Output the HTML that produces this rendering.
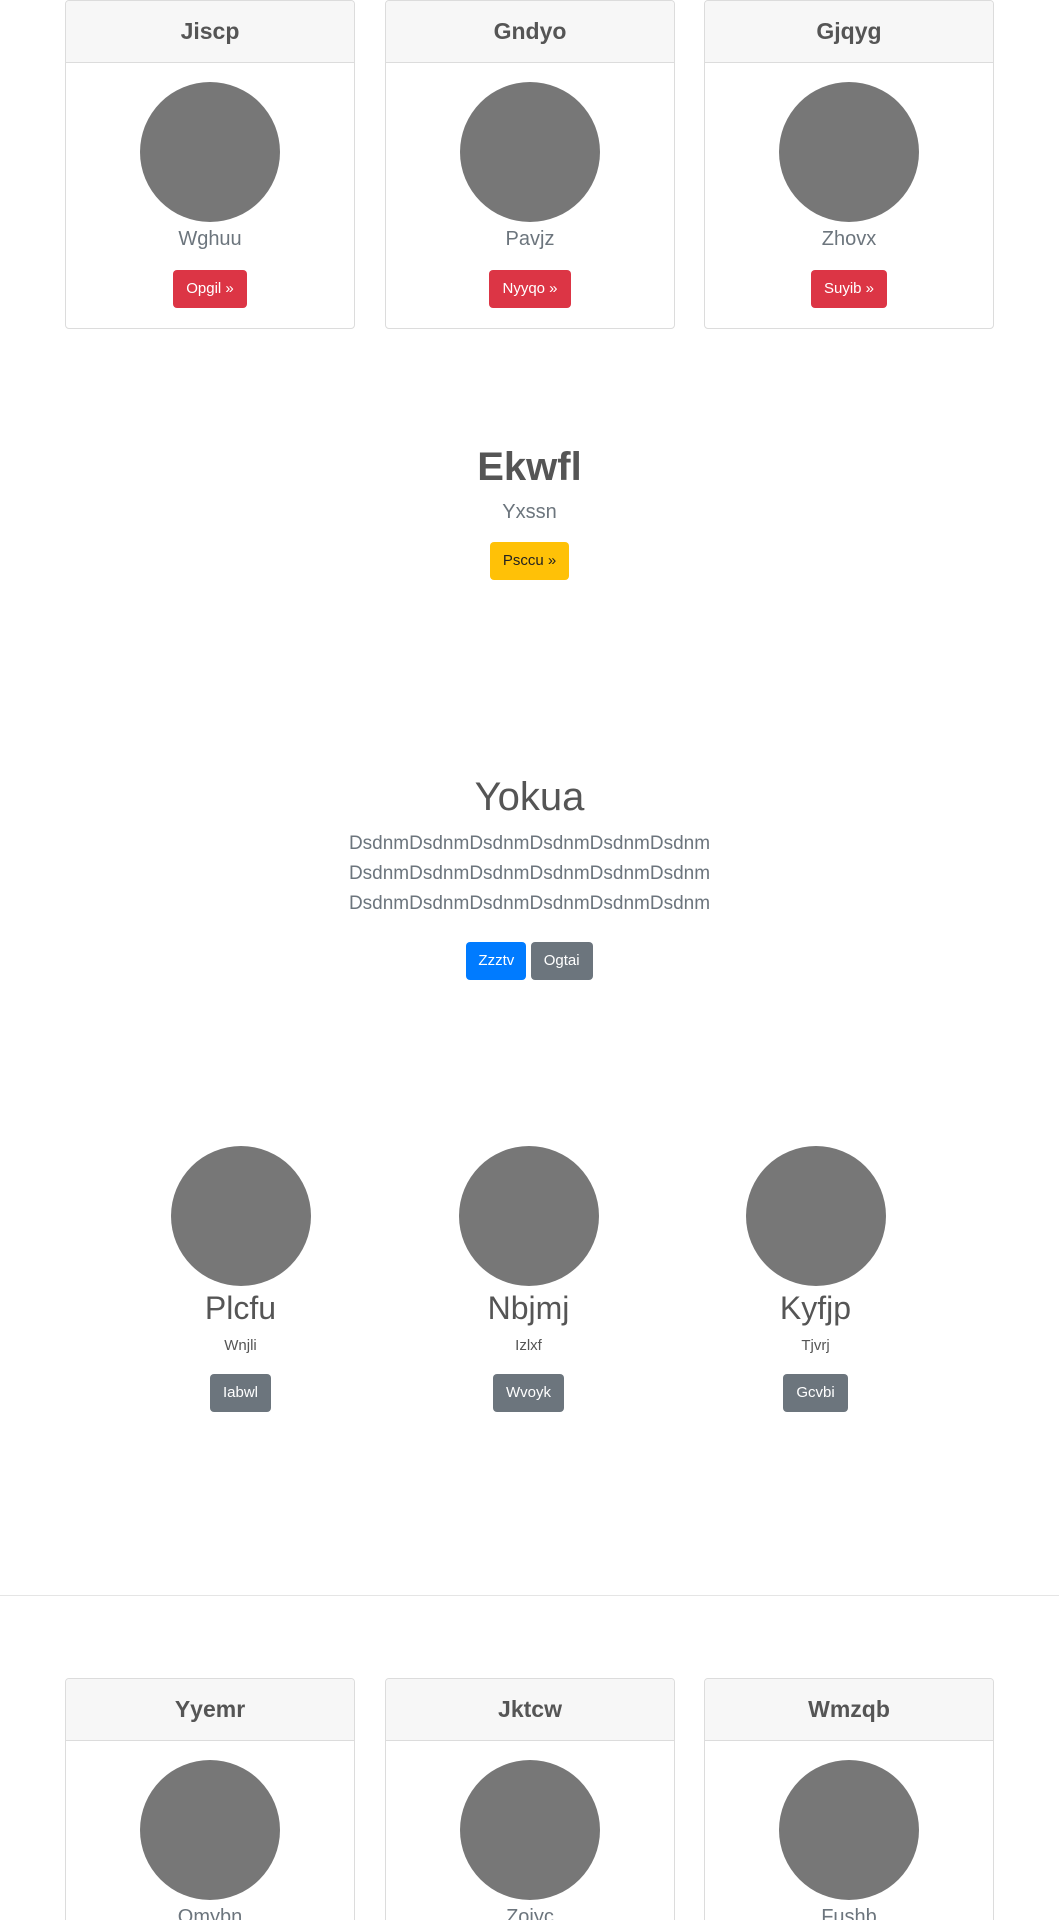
<!DOCTYPE html>
<html><head><meta charset="utf-8"><style>
*{box-sizing:border-box;margin:0;padding:0}
html,body{width:1059px;height:1920px;overflow:hidden;background:#fff}
#wrap{position:relative;width:1059px;height:1920px;overflow:hidden;font-family:"Liberation Sans",sans-serif;color:#555}
.card{position:absolute;width:290px;border:1px solid #dcdcdc;border-radius:4px;background:#fff;text-align:center;overflow:hidden}
.card .h{height:62px;background:#f7f7f7;border-bottom:1px solid #dcdcdc;font-size:23px;font-weight:bold;line-height:60px;color:#555}
.card .b{padding:19px 20px 20px}
.circ{width:140px;height:140px;border-radius:50%;background:#777;margin:0 auto}
.lead{font-size:20px;font-weight:300;line-height:30px;color:#6c757d}
.card .lead{margin-top:2px;margin-bottom:16px}
.btn{display:inline-block;height:38px;line-height:38px;padding:0 13px;border-radius:4px;color:#fff;font-size:15px}
.red{background:#dc3545}.yel{background:#ffc107;color:#222}.blue{background:#007bff}.gray{background:#6c757d}
.abs{position:absolute;left:0;width:1059px;text-align:center}
.col{position:absolute;width:287px;text-align:center}
</style></head><body><div id="wrap">

<div class="card" style="left:65px;top:0"><div class="h">Jiscp</div><div class="b"><div class="circ"></div><div class="lead">Wghuu</div><span class="btn red">Opgil »</span></div></div>
<div class="card" style="left:385px;top:0"><div class="h">Gndyo</div><div class="b"><div class="circ"></div><div class="lead">Pavjz</div><span class="btn red">Nyyqo »</span></div></div>
<div class="card" style="left:704px;top:0"><div class="h">Gjqyg</div><div class="b"><div class="circ"></div><div class="lead">Zhovx</div><span class="btn red">Suyib »</span></div></div>

<div class="abs" style="top:442px;font-size:40px;font-weight:bold;line-height:50px">Ekwfl</div>
<div class="abs lead" style="top:497px">Yxssn</div>
<div class="abs" style="top:542px"><span class="btn yel">Psccu »</span></div>

<div class="abs" style="top:772px;font-size:40px;font-weight:300;line-height:50px">Yokua</div>
<div class="abs lead" style="top:829px;font-size:19px;line-height:30px">DsdnmDsdnmDsdnmDsdnmDsdnmDsdnm<br>DsdnmDsdnmDsdnmDsdnmDsdnmDsdnm<br>DsdnmDsdnmDsdnmDsdnmDsdnmDsdnm</div>
<div class="abs" style="top:942px"><span class="btn blue" style="padding:0 12px">Zzztv</span> <span class="btn gray">Ogtai</span></div>

<div class="col" style="left:97px;top:1146px"><div class="circ"></div><div style="font-size:32px;font-weight:300;line-height:40px;margin-top:2px">Plcfu</div><div style="font-size:15px;line-height:24px;margin-top:6px">Wnjli</div><span class="btn gray" style="margin-top:16px">Iabwl</span></div>
<div class="col" style="left:385px;top:1146px"><div class="circ"></div><div style="font-size:32px;font-weight:300;line-height:40px;margin-top:2px">Nbjmj</div><div style="font-size:15px;line-height:24px;margin-top:6px">Izlxf</div><span class="btn gray" style="margin-top:16px">Wvoyk</span></div>
<div class="col" style="left:672px;top:1146px"><div class="circ"></div><div style="font-size:32px;font-weight:300;line-height:40px;margin-top:2px">Kyfjp</div><div style="font-size:15px;line-height:24px;margin-top:6px">Tjvrj</div><span class="btn gray" style="margin-top:16px">Gcvbi</span></div>

<div style="position:absolute;left:0;top:1595px;width:1059px;height:1px;background:#e5e5e5"></div>

<div class="card" style="left:65px;top:1678px"><div class="h">Yyemr</div><div class="b"><div class="circ"></div><div class="lead">Omybn</div></div></div>
<div class="card" style="left:385px;top:1678px"><div class="h">Jktcw</div><div class="b"><div class="circ"></div><div class="lead">Zojyc</div></div></div>
<div class="card" style="left:704px;top:1678px"><div class="h">Wmzqb</div><div class="b"><div class="circ"></div><div class="lead">Fushb</div></div></div>

</div></body></html>
